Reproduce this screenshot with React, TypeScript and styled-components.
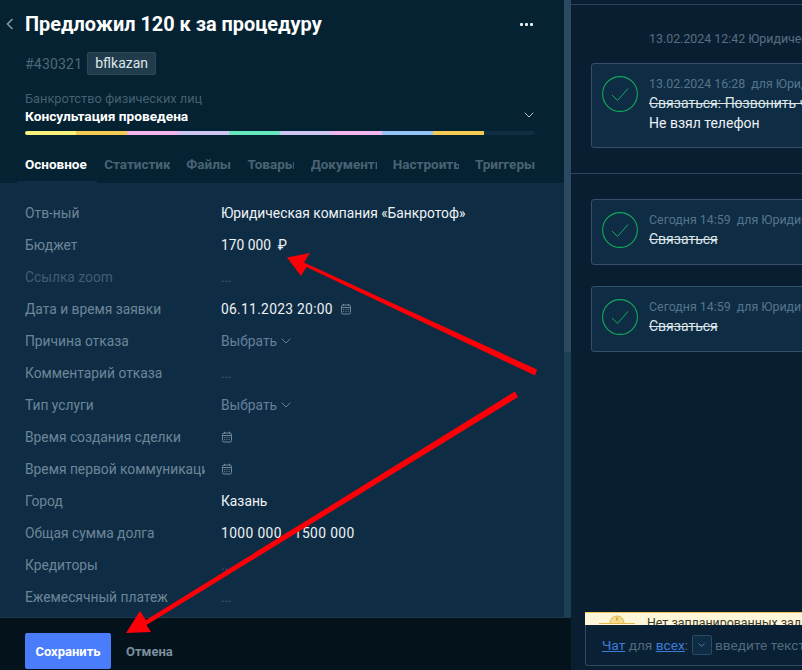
import React from "react";
import styled, { createGlobalStyle } from "styled-components";

const GlobalStyle = createGlobalStyle`
    html, body {
        margin: 0;
        padding: 0;
        background: #0a1e31;
    }
    body {
        font-family: "Roboto", "Noto Sans", sans-serif;
        font-size: 14px;
        color: #fff;
    }
`;

type Field = {
    label: string;
    value?: string;
    kind: "text" | "empty" | "select" | "date" | "datetime";
    faded?: boolean;
    spacing?: number;
};

const fields: Array<Field> = [
    { label: "Отв-ный", value: "Юридическая компания «Банкротоф»", kind: "text" },
    { label: "Бюджет", value: "170 000  ₽", kind: "text" },
    { label: "Ссылка zoom", kind: "empty", faded: true },
    { label: "Дата и время заявки", value: "06.11.2023 20:00", kind: "datetime", spacing: 0.3 },
    { label: "Причина отказа", kind: "select" },
    { label: "Комментарий отказа", kind: "empty" },
    { label: "Тип услуги", kind: "select" },
    { label: "Время создания сделки", kind: "date" },
    { label: "Время первой коммуникации", kind: "date" },
    { label: "Город", value: "Казань", kind: "text" },
    { label: "Общая сумма долга", value: "1000 000 - 1500 000", kind: "text", spacing: 0.4 },
    { label: "Кредиторы", kind: "empty" },
    { label: "Ежемесячный платеж", kind: "empty" },
];

const tabs = ["Основное", "Статистика", "Файлы", "Товары", "Документы", "Настроить", "Триггеры"];
const tabWidths = [63, 66, 45, 47, 66, 66, 60];

const stages = ["#f6f27a", "#f3ca52", "#f3b5ee", "#cdc5f3", "#66e8bd", "#cdc5f3", "#f3b5ee", "#93c4f5", "#f3ca52"];

const Calendar = () => (
    <CalendarSvg width="12" height="12" viewBox="0 0 12 12" fill="none" stroke="currentColor" strokeWidth="0.9">
        <rect x="1.5" y="2" width="9" height="9" rx="1.5" />
        <path d="M1.5 4.5h9M3.5 .8v1.8M8.5 .8v1.8" />
        <path d="M3.2 6.5h1M5.5 6.5h1M7.8 6.5h1M3.2 8.6h1M5.5 8.6h1M7.8 8.6h1" />
    </CalendarSvg>
);

const Chevron = () => (
    <svg width="10" height="6" viewBox="0 0 10 6" fill="none" stroke="currentColor" strokeWidth="1">
        <path d="M.7 .7 5 5 9.3 .7" />
    </svg>
);

const DoneIcon = () => (
    <DoneSvg width="36" height="36" viewBox="0 0 36 36" fill="none">
        <circle cx="18" cy="18" r="17.4" stroke="#12a85a" strokeWidth="1.1" />
        <path d="M10 19 15.5 24.5 26 12.5" stroke="#12a85a" strokeWidth="1" />
    </DoneSvg>
);

const WarningGlyph = () => (
    <WarningSvg width="36" height="12" viewBox="0 0 36 12" fill="none">
        <path d="M11 10a7 7 0 0 1 14 0" stroke="#e5b84a" strokeWidth="1" fill="#f6dc8a" />
        <path d="M18 4.5v3" stroke="#a97f1e" strokeWidth="1" />
        <path d="M0 10.5h36" stroke="#e5b84a" strokeWidth="1.2" />
    </WarningSvg>
);

function renderValue(field: Field) {
    switch (field.kind) {
        case "empty":
            return <Dots>...</Dots>;
        case "select":
            return (
                <Select>
                    Выбрать <Chevron />
                </Select>
            );
        case "date":
            return <Calendar />;
        case "datetime":
            return (
                <>
                    <Value $spacing={field.spacing}>{field.value}</Value>
                    <Calendar />
                </>
            );
        default:
            return <Value $spacing={field.spacing}>{field.value}</Value>;
    }
}

export default function App() {
    return (
        <>
            <GlobalStyle />
            <Page>
                <LeftPanel>
                    <LeftTop>
                        <LeftContent>
                            <Header>
                                <TitleRow>
                                    <BackIcon width="8" height="12" viewBox="0 0 8 12" fill="none" stroke="#8497a4" strokeWidth="1.6">
                                        <path d="M6.5 1 1.5 6l5 5" />
                                    </BackIcon>
                                    <Title>Предложил 120 к за процедуру</Title>
                                    <More>
                                        <i />
                                        <i />
                                        <i />
                                    </More>
                                </TitleRow>
                                <MetaRow>
                                    <LeadId>#430321</LeadId>
                                    <Tag>bflkazan</Tag>
                                </MetaRow>
                                <Pipeline>Банкротство физических лиц</Pipeline>
                                <StageRow>
                                    <Stage>Консультация проведена</Stage>
                                    <StageChevron>
                                        <Chevron />
                                    </StageChevron>
                                </StageRow>
                                <StageBar>
                                    {stages.map((color, i) => (
                                        <StageSegment key={i} $color={color} />
                                    ))}
                                    <StageRest />
                                </StageBar>
                                <Tabs>
                                    {tabs.map((tab, i) => (
                                        <Tab key={tab} $active={i === 0} style={{ width: tabWidths[i] }}>
                                            {tab}
                                        </Tab>
                                    ))}
                                </Tabs>
                            </Header>
                            <FormArea>
                                {fields.map((field) => (
                                    <Row key={field.label}>
                                        <Label $faded={field.faded}>{field.label}</Label>
                                        <ValueCell>{renderValue(field)}</ValueCell>
                                    </Row>
                                ))}
                            </FormArea>
                        </LeftContent>
                        <ScrollTrack>
                            <ScrollThumb />
                        </ScrollTrack>
                    </LeftTop>
                    <Footer>
                        <SaveButton type="button">Сохранить</SaveButton>
                        <CancelButton type="button">Отмена</CancelButton>
                    </Footer>
                </LeftPanel>
                <Feed>
                    <TopLine />
                    <FeedNote>13.02.2024 12:42 Юридическая компания</FeedNote>
                    <TaskCard $first>
                        <DoneIcon />
                        <TaskText>
                            <TaskMeta>13.02.2024 16:28&nbsp; для Юридическая компания</TaskMeta>
                            <TaskTitle>Связаться: Позвонить через час</TaskTitle>
                            <TaskResult>Не взял телефон</TaskResult>
                        </TaskText>
                    </TaskCard>
                    <FeedDivider />
                    <TaskCard>
                        <DoneIcon />
                        <TaskText>
                            <TaskMeta>Сегодня 14:59&nbsp; для Юридическая компания</TaskMeta>
                            <TaskTitle>Связаться</TaskTitle>
                        </TaskText>
                    </TaskCard>
                    <TaskCard>
                        <DoneIcon />
                        <TaskText>
                            <TaskMeta>Сегодня 14:59&nbsp; для Юридическая компания</TaskMeta>
                            <TaskTitle>Связаться</TaskTitle>
                        </TaskText>
                    </TaskCard>
                    <Composer>
                        <Warning>
                            <WarningGlyph />
                            <WarningText>Нет запланированных задач</WarningText>
                        </Warning>
                        <ChatBox>
                            <ChatLink>Чат</ChatLink>
                            <span>&nbsp;для&nbsp;</span>
                            <ChatLink>всех</ChatLink>
                            <span>:&nbsp;</span>
                            <ChatSelect>
                                <Chevron />
                            </ChatSelect>
                            <span>&nbsp;введите текст</span>
                        </ChatBox>
                    </Composer>
                </Feed>
                <Arrows width="802" height="670" viewBox="0 0 802 670" fill="#fb0007" stroke="none">
                    <path d="M537 369.5 304 262.5 310 253 287 257.5 301 276 306.5 267 535 375.5Z" />
                    <path d="M515 391.5 146 620 140 611 126 633 151 632 146.5 625 518 397Z" />
                </Arrows>
            </Page>
        </>
    );
}

const Page = styled.div`
    position: relative;
    display: flex;
    width: 802px;
    height: 670px;
    overflow: hidden;
`;

const LeftPanel = styled.section`
    display: flex;
    flex-direction: column;
    width: 571px;
    height: 670px;
    flex: none;
`;

const LeftTop = styled.div`
    display: flex;
    flex: 1;
    min-height: 0;
`;

const LeftContent = styled.div`
    display: flex;
    flex-direction: column;
    flex: 1;
    min-width: 0;
`;

const Header = styled.header`
    height: 183px;
    flex: none;
    box-sizing: border-box;
    padding: 12px 29px 0 25px;
    background: #042232;
`;

const TitleRow = styled.div`
    position: relative;
    display: flex;
    align-items: center;
    height: 24px;
`;

const BackIcon = styled.svg`
    position: absolute;
    left: -19px;
    top: 6px;
`;

const Title = styled.h1`
    margin: 0;
    font-size: 19.9px;
    font-weight: 700;
    white-space: nowrap;
    color: #fff;
`;

const More = styled.div`
    display: flex;
    gap: 2px;
    margin-left: auto;
    margin-right: 2px;

    i {
        width: 3px;
        height: 3px;
        background: #e8edf0;
        border-radius: 1px;
    }
`;

const MetaRow = styled.div`
    display: flex;
    align-items: center;
    gap: 5px;
    margin-top: 16px;
    height: 23px;
`;

const LeadId = styled.span`
    font-size: 14px;
    letter-spacing: 0.2px;
    color: #4f6877;
`;

const Tag = styled.span`
    box-sizing: border-box;
    height: 23px;
    padding: 0 7px;
    line-height: 21px;
    font-size: 14px;
    color: #dfe6ea;
    background: #203b4b;
    border: 1px solid #2e4859;
    border-radius: 2px;
`;

const Pipeline = styled.div`
    margin-top: 16px;
    font-size: 12.8px;
    line-height: 16px;
    color: #466070;
`;

const StageRow = styled.div`
    display: flex;
    justify-content: space-between;
    height: 18px;
`;

const Stage = styled.div`
    font-size: 13.7px;
    font-weight: 700;
    line-height: 18px;
    color: #fff;
`;

const StageChevron = styled.span`
    margin-right: 1px;
    color: #b6c3cb;
    line-height: 12px;
`;

const StageBar = styled.div`
    display: flex;
    height: 4px;
    margin-top: 6px;
    border-radius: 2px;
    overflow: hidden;
    background: #0f2e41;
`;

const StageSegment = styled.div<{ $color: string }>`
    width: 51px;
    flex: none;
    background: ${(props) => props.$color};
`;

const StageRest = styled.div`
    flex: 1;
`;

const Tabs = styled.nav`
    display: flex;
    justify-content: space-between;
    margin-top: 19px;
`;

const Tab = styled.div<{ $active: boolean }>`
    position: relative;
    font-size: 13.5px;
    font-weight: 700;
    line-height: 20px;
    white-space: nowrap;
    overflow: ${(props) => (props.$active ? "visible" : "hidden")};
    color: ${(props) => (props.$active ? "#fff" : "#4a6374")};

    &::after {
        content: "";
        display: ${(props) => (props.$active ? "block" : "none")};
        position: absolute;
        left: -8px;
        right: -9px;
        top: 27px;
        height: 2px;
        background: #0e2d45;
    }
`;

const FormArea = styled.div`
    flex: 1;
    box-sizing: border-box;
    padding: 14px 25px 0;
    background: #0e2d45;
    overflow: hidden;
`;

const Row = styled.div`
    display: grid;
    grid-template-columns: 180px 1fr;
    column-gap: 16px;
    align-items: center;
    height: 32px;
`;

const Label = styled.div<{ $faded?: boolean }>`
    font-size: 13.8px;
    white-space: nowrap;
    overflow: hidden;
    color: ${(props) => (props.$faded ? "#405d72" : "#6d8597")};
`;

const ValueCell = styled.div`
    display: flex;
    align-items: center;
    gap: 7px;
    font-size: 13.8px;
`;

const Value = styled.span<{ $spacing?: number }>`
    color: #eef2f5;
    white-space: pre;
    letter-spacing: ${(props) => props.$spacing ?? 0}px;
`;

const Dots = styled.span`
    color: #405d72;
`;

const Select = styled.span`
    display: flex;
    align-items: center;
    gap: 4px;
    color: #66809a;
`;

const CalendarSvg = styled.svg`
    color: #7d92a2;
`;

const Footer = styled.footer`
    display: flex;
    align-items: center;
    gap: 15px;
    height: 53px;
    flex: none;
    box-sizing: border-box;
    padding: 14px 25px 0;
    background: #04121c;
    border-top: 1px solid #22394a;
`;

const SaveButton = styled.button`
    width: 86px;
    height: 36px;
    padding: 0;
    font-family: inherit;
    font-size: 13px;
    font-weight: 700;
    color: #fff;
    background: #4a7dfb;
    border: none;
    border-radius: 2px;
`;

const CancelButton = styled.button`
    padding: 0;
    font-family: inherit;
    font-size: 13px;
    font-weight: 700;
    color: #7b8f9d;
    background: none;
    border: none;
`;

const ScrollTrack = styled.div`
    width: 7px;
    flex: none;
    background: #1d3f56;
`;

const ScrollThumb = styled.div`
    height: 352px;
    background: #2b4a60;
`;

const Feed = styled.section`
    position: relative;
    flex: 1;
    min-width: 0;
    background: #0a1e31;
    overflow: hidden;
`;

const TopLine = styled.div`
    height: 4px;
    border-bottom: 1px solid #2c4459;
`;

const FeedNote = styled.div`
    margin: 26px 0 0 78px;
    font-size: 12.4px;
    line-height: 16px;
    white-space: nowrap;
    color: #566f83;
`;

const TaskCard = styled.article<{ $first?: boolean }>`
    display: flex;
    gap: 11px;
    box-sizing: border-box;
    width: 260px;
    margin: ${(props) => (props.$first ? "16px 0 0 20px" : "0 0 21px 20px")};
    height: ${(props) => (props.$first ? "85px" : "66px")};
    padding: 12px 10px;
    background: #0e2d45;
    border: 1px solid #35506a;
    border-radius: 3px;
    white-space: nowrap;
`;

const DoneSvg = styled.svg`
    flex: none;
`;

const TaskText = styled.div`
    display: flex;
    flex-direction: column;
`;

const TaskMeta = styled.div`
    margin-bottom: 1px;
    font-size: 12.4px;
    line-height: 16px;
    color: #56738a;
`;

const TaskTitle = styled.div`
    font-size: 14px;
    line-height: 20px;
    color: #dfe6ea;
    text-decoration: line-through;
`;

const TaskResult = styled.div`
    font-size: 14px;
    line-height: 20px;
    color: #eef2f5;
`;

const FeedDivider = styled.div`
    height: 1px;
    margin: 25px 0 25px;
    background: #2c4459;
`;

const Composer = styled.div`
    position: absolute;
    left: 14px;
    top: 612px;
    width: 260px;
`;

const Warning = styled.div`
    position: relative;
    display: flex;
    box-sizing: border-box;
    height: 13px;
    padding-left: 14px;
    overflow: hidden;
    background: #fdf6d8;
    border-top: 1px solid #ecc85a;
`;

const WarningSvg = styled.svg`
    flex: none;
`;

const WarningText = styled.span`
    margin-left: 12px;
    font-size: 12.4px;
    line-height: 20px;
    color: #3b3a2a;
    white-space: nowrap;
`;

const ChatBox = styled.div`
    display: flex;
    align-items: center;
    box-sizing: border-box;
    height: 41px;
    padding-left: 16px;
    font-size: 13.7px;
    white-space: nowrap;
    color: #50697d;
    background: #0a2034;
    border: 1px solid #2c4b63;
    border-top: none;
    border-radius: 0 0 3px 3px;
`;

const ChatLink = styled.a`
    color: #3f7ddc;
    text-decoration: underline;
`;

const ChatSelect = styled.span`
    display: inline-flex;
    align-items: center;
    justify-content: center;
    box-sizing: border-box;
    width: 20px;
    height: 20px;
    color: #8497a4;
    background: #0e2d45;
    border: 1px solid #2c4b63;
    border-radius: 2px;

    svg {
        width: 7px;
    }
`;

const Arrows = styled.svg`
    position: absolute;
    left: 0;
    top: 0;
    pointer-events: none;
`;
